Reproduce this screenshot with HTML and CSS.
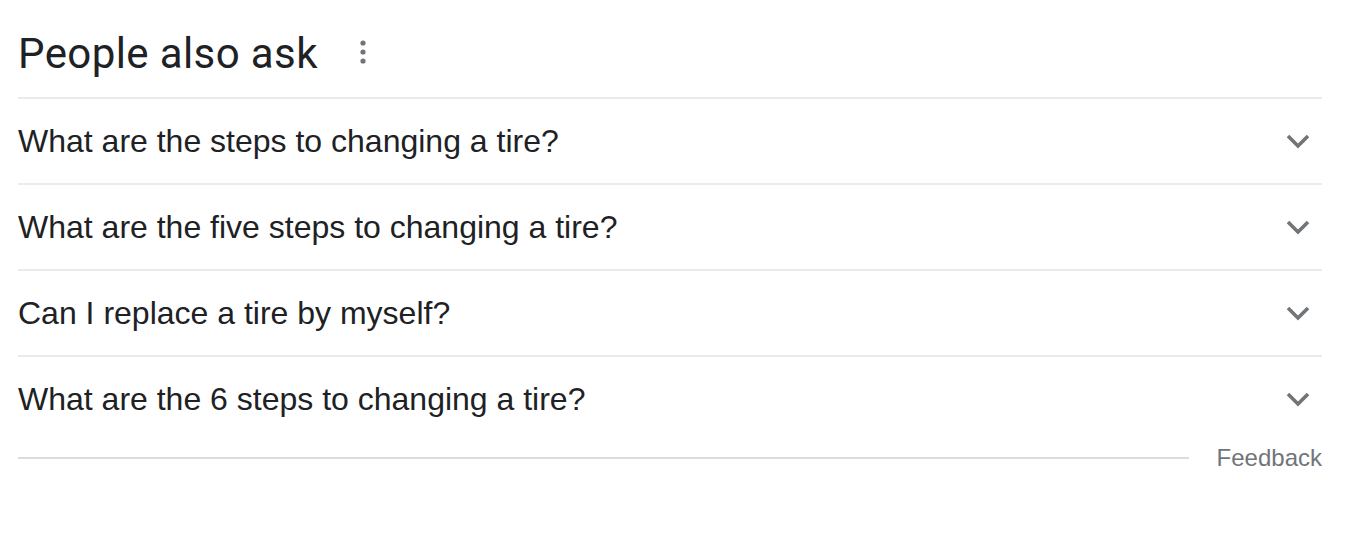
FILE: index.html
```html
<!DOCTYPE html>
<html lang="en">
<head>
    <meta charset="UTF-8">
    <title>People also ask</title>
    <link rel="stylesheet" href="styles.css">
</head>
<body>
    <div class="paa">
        <div class="paa-header">
            <h2>People also ask</h2>
            <span class="more-btn">
                <svg width="6" height="24" viewBox="0 0 6 24">
                    <circle cx="3" cy="3" r="2.6" />
                    <circle cx="3" cy="12" r="2.6" />
                    <circle cx="3" cy="21" r="2.6" />
                </svg>
            </span>
        </div>

        <div class="question">
            <span>What are the steps to changing a tire?</span>
            <svg class="chevron" width="24" height="15" viewBox="0 0 24 15"><polyline points="2,2 12,12 22,2" /></svg>
        </div>
        <div class="question">
            <span>What are the five steps to changing a tire?</span>
            <svg class="chevron" width="24" height="15" viewBox="0 0 24 15"><polyline points="2,2 12,12 22,2" /></svg>
        </div>
        <div class="question">
            <span>Can I replace a tire by myself?</span>
            <svg class="chevron" width="24" height="15" viewBox="0 0 24 15"><polyline points="2,2 12,12 22,2" /></svg>
        </div>
        <div class="question question-last">
            <span>What are the 6 steps to changing a tire?</span>
            <svg class="chevron" width="24" height="15" viewBox="0 0 24 15"><polyline points="2,2 12,12 22,2" /></svg>
        </div>

        <div class="feedback-row">
            <div class="feedback-line"></div>
            <span class="feedback">Feedback</span>
        </div>
    </div>
</body>
</html>
```

FILE: styles.css
```css
body {
    margin: 0;
    background: #fff;
    font-family: "Liberation Sans", Arial, sans-serif;
    color: #202124;
}

.paa {
    width: 1304px;
    margin-left: 18px;
}

.paa-header {
    display: flex;
    align-items: flex-start;
    box-sizing: border-box;
    height: 99px;
    padding-top: 29px;
    border-bottom: 2px solid #ebebeb;
}

.paa-header h2 {
    margin: 0;
    font-family: Roboto, "Noto Sans", sans-serif;
    font-weight: 400;
    font-size: 42px;
    line-height: 49px;
    letter-spacing: 0.4px;
    color: #202124;
}

.more-btn {
    display: flex;
    margin-left: 42px;
    margin-top: 11px;
}

.more-btn svg {
    fill: #70757a;
}

.question {
    display: flex;
    align-items: center;
    justify-content: space-between;
    height: 84px;
    border-bottom: 2px solid #ebebeb;
    font-size: 32px;
}

.question-last {
    border-bottom: none;
}

.chevron {
    margin-right: 12px;
    fill: none;
    stroke: #70757a;
    stroke-width: 3.6;
}

.feedback-row {
    display: flex;
    align-items: center;
    height: 34px;
}

.feedback-line {
    flex: 1;
    height: 2px;
    background: #dadce0;
    margin-right: 28px;
}

.feedback {
    font-size: 24px;
    color: #70757a;
}
```
